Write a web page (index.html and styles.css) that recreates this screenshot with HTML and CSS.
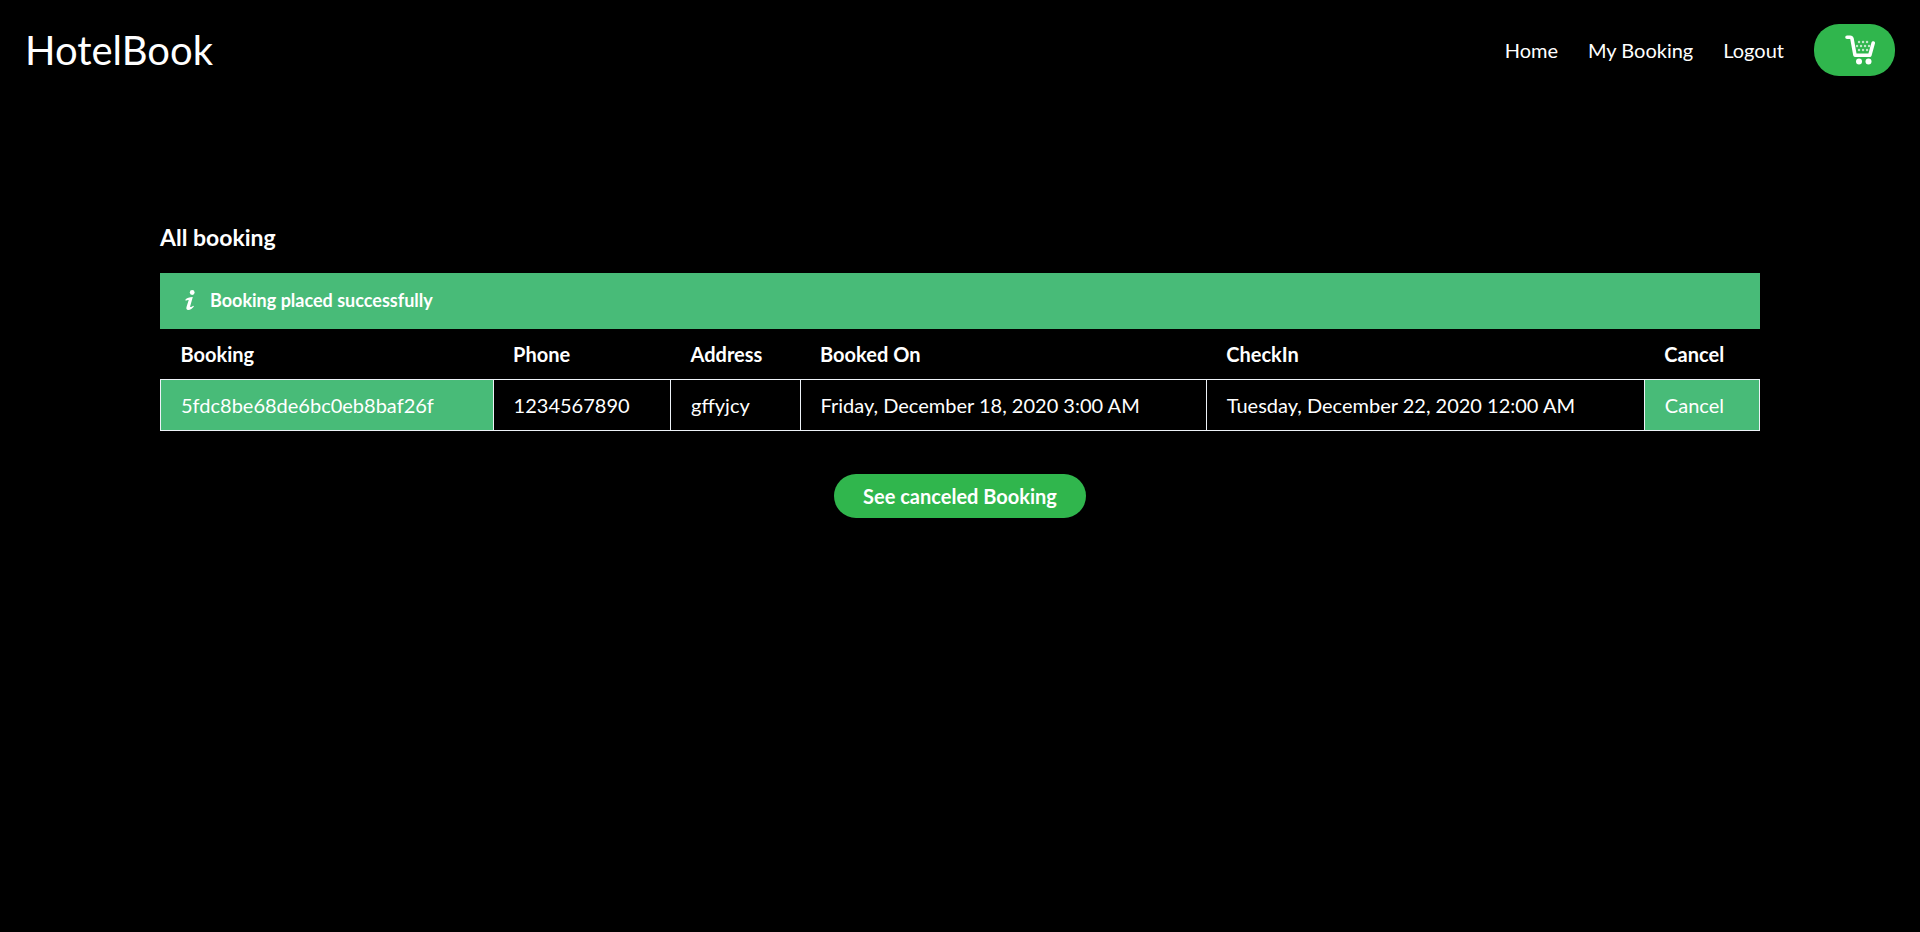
FILE: index.html
```html
<!DOCTYPE html>
<html lang="en">
<head>
<meta charset="utf-8">
<title>HotelBook</title>
<link rel="stylesheet" href="styles.css">
</head>
<body>
<header class="topbar">
  <a class="brand" href="#">HotelBook</a>
  <nav class="nav">
    <a href="#">Home</a>
    <a href="#">My Booking</a>
    <a href="#">Logout</a>
    <a class="cart" href="#" aria-label="Cart">
      <svg class="cart-icon" viewBox="0 0 30 30" fill="none" stroke="#fff" stroke-linecap="round" stroke-linejoin="round">
        <path d="M2 2.200h3.200q1.400 0 1.800 1.600L10 20.200h14.800L28.200 8" stroke-width="3.600"/>
        <path d="M14 7h9M12 11h13M14 15h9" stroke-width="2.400" stroke-dasharray="0.100 3.900" opacity="0.700"/>
        <circle cx="14" cy="26.500" r="3" fill="#fff" stroke="none"/>
        <circle cx="23.500" cy="26.500" r="3" fill="#fff" stroke="none"/>
      </svg>
    </a>
  </nav>
</header>
<main class="content">
  <h1 class="title">All booking</h1>
  <div class="alert" role="status">
    <svg class="info-icon" viewBox="0 0 10 20" fill="#fff">
      <circle cx="7.200" cy="2.500" r="2.400"/>
      <path d="M.3 9.800C1.800 8 4.500 7 7.800 7L5.200 16.200c-.2.900.2 1.100 1 .7l2.200-1.200.5.800C7.600 18.400 5.200 20 3.200 20 1.500 20 1 18.800 1.500 17.100L3.700 9.900c-1.100-.1-2 .2-2.900.8z"/>
    </svg>
    <p>Booking placed successfully</p>
  </div>
  <table class="bookings">
    <colgroup>
      <col class="col-id"><col class="col-phone"><col class="col-address"><col class="col-booked"><col class="col-checkin"><col class="col-cancel">
    </colgroup>
    <thead>
      <tr><th>Booking</th><th>Phone</th><th>Address</th><th>Booked On</th><th>CheckIn</th><th>Cancel</th></tr>
    </thead>
    <tbody>
      <tr>
        <td class="accent"><a href="#">5fdc8be68de6bc0eb8baf26f</a></td>
        <td>1234567890</td>
        <td>gffyjcy</td>
        <td>Friday, December 18, 2020 3:00 AM</td>
        <td>Tuesday, December 22, 2020 12:00 AM</td>
        <td class="accent"><button type="button">Cancel</button></td>
      </tr>
    </tbody>
  </table>
  <a class="pill" href="#">See canceled Booking</a>
</main>
</body>
</html>
```
FILE: styles.css
```css
* {
  box-sizing: border-box;
  margin: 0;
  padding: 0;
}

body {
  background: #000;
  color: #fff;
  font-family: Lato, sans-serif;
  font-size: 20px;
  line-height: 30px;
}

a {
  color: inherit;
  text-decoration: none;
}

.topbar {
  display: flex;
  align-items: center;
  justify-content: space-between;
  padding: 20px 25px;
}

.brand {
  font-size: 40px;
  line-height: 60px;
}

.nav {
  display: flex;
  align-items: center;
  gap: 30px;
}

.cart {
  display: flex;
  padding: 11px 20px 11px 31px;
  border-radius: 25px;
  background: #30b64d;
}

.cart-icon {
  width: 30px;
  height: 30px;
}

.content {
  display: flex;
  flex-direction: column;
  padding: 119px 160px 0;
}

.title {
  margin-bottom: 18px;
  font-size: 23px;
  line-height: 36px;
}

.alert {
  display: flex;
  align-items: center;
  gap: 15px;
  padding: 12px 25px 14px;
  background: #48bb78;
  font-size: 18px;
  font-weight: 700;
}

.info-icon {
  width: 10px;
  height: 20px;
}

.bookings {
  width: 100%;
  border-collapse: collapse;
  text-align: left;
}

.col-id { width: 20.8%; }
.col-phone { width: 11.1%; }
.col-address { width: 8.1%; }
.col-booked { width: 25.4%; }
.col-checkin { width: 27.4%; }
.col-cancel { width: 7.2%; }

.bookings th,
.bookings td {
  padding: 10px 20px;
}

.bookings td {
  border: 1px solid #edf2f7;
}

.bookings .accent {
  background: #48bb78;
}

.bookings button {
  display: block;
  border: 0;
  background: none;
  color: inherit;
  font: inherit;
}

.pill {
  align-self: center;
  margin-top: 43px;
  padding: 7px 29px;
  border-radius: 25px;
  background: #30b64d;
  font-weight: 700;
}
```
